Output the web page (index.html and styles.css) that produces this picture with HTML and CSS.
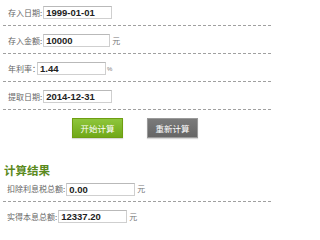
FILE: index.html
```html
<!DOCTYPE html>
<html lang="zh-CN">
<head>
<meta charset="utf-8">
<link rel="stylesheet" href="styles.css">
</head>
<body>
<div class="calc">
  <div class="form">
    <div class="row first"><span class="label">存入日期:</span><input class="field" type="text" value="1999-01-01"></div>
    <div class="row"><span class="label">存入金额:</span><input class="field w67" type="text" value="10000"><span class="unit">元</span></div>
    <div class="row"><span class="label tight">年利率：</span><input class="field w69" type="text" value="1.44"><span class="unit pct">%</span></div>
    <div class="row"><span class="label">提取日期:</span><input class="field" type="text" value="2014-12-31"></div>
  </div>
  <div class="actions">
    <button class="btn btn-green" type="button">开始计算</button>
    <button class="btn btn-gray" type="button">重新计算</button>
  </div>
  <h2 class="title">计算结果</h2>
  <div class="result">
    <div class="row r1"><span class="label">扣除利息税总额:</span><input class="field" type="text" value="0.00"><span class="unit">元</span></div>
    <div class="row r2 nodash"><span class="label">实得本息总额:</span><input class="field" type="text" value="12337.20"><span class="unit">元</span></div>
  </div>
</div>
</body>
</html>
```

FILE: styles.css
```css
html, body {
  margin: 0;
  padding: 0;
  background: #fff;
}
body {
  font-family: "Noto Sans CJK SC", "Liberation Sans", sans-serif;
  color: #555;
  overflow: hidden;
}
.calc {
  width: 269px;
  margin-left: 3px;
}
.form {
  margin-top: -2px;
}
.row {
  display: flex;
  align-items: center;
  box-sizing: border-box;
  height: 28px;
  padding: 2px 0 1px 5px;
  background: linear-gradient(to right, #a0a0a0 60%, transparent 0) left bottom / 5px 1px repeat-x;
}
.row.nodash {
  background: none;
}
.label {
  font-size: 8px;
  line-height: 12px;
  color: #666;
  white-space: nowrap;
}
.label.tight {
  margin-right: -4px;
}
.field {
  box-sizing: border-box;
  width: 69px;
  height: 13px;
  margin: 0 0 0 1px;
  padding: 0 0 0 2px;
  border: 1px solid #cfcfcf;
  border-top-color: #b9b9b9;
  background: #fff;
  font-family: "Liberation Sans", Arial, sans-serif;
  font-weight: bold;
  font-size: 9.5px;
  color: #222;
  outline: none;
}
.w67 { width: 67px; }
.w69 { width: 69px; }
.unit {
  margin-left: 2px;
  font-size: 8px;
  line-height: 12px;
  color: #777;
}
.unit.pct {
  font-family: "Liberation Sans", Arial, sans-serif;
  font-size: 6px;
  margin-left: 1px;
}
.actions {
  display: flex;
  gap: 24px;
  padding-left: 69px;
  margin-top: 8px;
}
.btn {
  box-sizing: border-box;
  width: 51px;
  height: 20px;
  padding: 0;
  font-family: "Noto Sans CJK SC", sans-serif;
  font-size: 8.5px;
  color: #fff;
  cursor: pointer;
}
.btn-green {
  border: 1px solid #6f9e12;
  background: linear-gradient(#8ec63c, #70a818);
  box-shadow: 0 1px 1px rgba(0,0,0,0.15);
}
.btn-gray {
  border: 1px solid #9a9a9a;
  background: linear-gradient(#7a7a7a, #666);
  box-shadow: 0 1px 1px rgba(0,0,0,0.15);
}
.title {
  margin: 25px 0 0 1px;
  font-size: 11.5px;
  line-height: 14px;
  font-weight: bold;
  color: #5b8a1d;
}
.result .row {
  padding-left: 4px;
}
.result .r1 {
  height: 25px;
  padding-top: 0;
}
.result .r2 {
  height: 28px;
  padding-top: 2px;
}
```
